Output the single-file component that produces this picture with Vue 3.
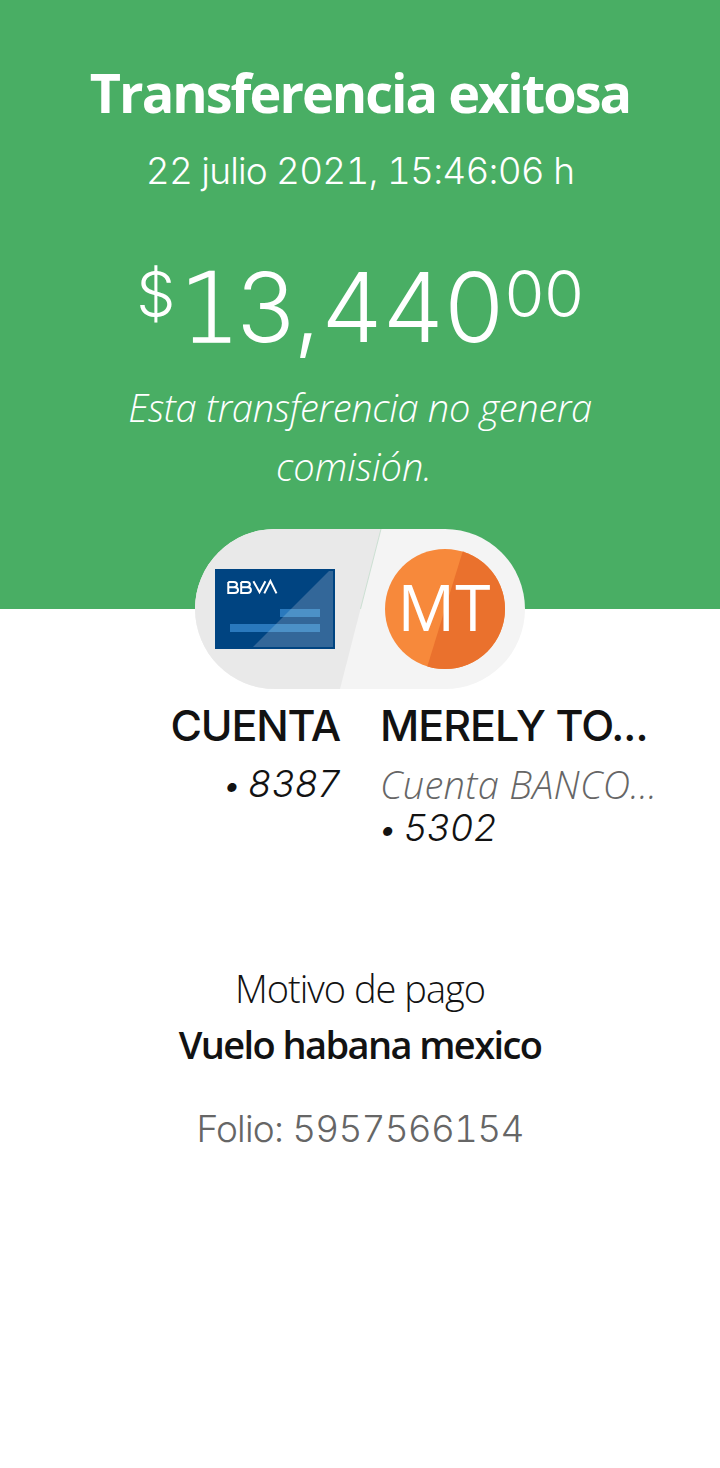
<script setup>
const receipt = {
  title: 'Transferencia exitosa',
  date: '22 julio 2021, 15:46:06 h',
  whole: '3,440',
  cents: '00',
  reason: 'Vuelo habana mexico',
  folio: '5957566154',
}
</script>

<template>
  <main class="receipt">
    <header class="hero">
      <h1 class="title">{{ receipt.title }}</h1>
      <p class="date">{{ receipt.date }}</p>
      <p class="amount">
        <span class="currency">$</span>
        <span class="whole"><span class="lead">1</span>{{ receipt.whole }}</span>
        <span class="cents">{{ receipt.cents }}</span>
      </p>
      <p class="note">Esta transferencia no genera<br /><span class="note-end">comisión.</span></p>
    </header>

    <svg class="pill" width="330" height="160" viewBox="0 0 330 160">
      <defs>
        <clipPath id="pill-shape"><rect width="330" height="160" rx="80" /></clipPath>
        <clipPath id="avatar-shape"><circle cx="250" cy="80" r="60" /></clipPath>
      </defs>
      <g clip-path="url(#pill-shape)">
        <rect width="330" height="160" fill="#f4f4f4" />
        <path d="M0 0H186L145 160H0Z" fill="#e9e9e9" />
        <path d="M186 0L165.500 80" stroke="#c3dccb" stroke-width="0.8" />
      </g>
      <rect x="20" y="40" width="120" height="80" fill="#004481" />
      <path d="M58 118L134 42H138V118Z" fill="#336799" />
      <path d="M85 80H125V88H85ZM35 95H125V103H35Z" fill="#2a79bd" />
      <path d="M96 80H125V88H88ZM81 95H125V103H73Z" fill="#4c91c7" />
      <g fill="none" stroke="#fff" stroke-width="2">
        <path d="M33.300 53V64H39.500C44.200 64 44.200 58.200 39.500 58.200H34M33.300 53H38.900C43 53 43 58.200 38.900 58.200" />
        <path d="M46.200 53V64H52.400C57.100 64 57.100 58.200 52.400 58.200H47M46.200 53H51.800C55.900 53 55.900 58.200 51.800 58.200" />
        <path d="M58.400 52.200L64.500 63.200L70.400 52.200M69.300 64.400L75.400 52L81.500 64.400" />
      </g>
      <g clip-path="url(#avatar-shape)">
        <rect x="190" y="20" width="120" height="120" fill="#f7893b" />
        <path d="M270 15H320V145H230Z" fill="#ea712d" />
      </g>
      <text class="initials" x="249" y="102" text-anchor="middle">MT</text>
    </svg>

    <section class="accounts">
      <div class="account origin">
        <p class="name">CUENTA</p>
        <p class="number"><span class="dot">•</span> 8387</p>
      </div>
      <div class="account">
        <p class="name merchant">MERELY TO...</p>
        <p class="bank">Cuenta BANCO...</p>
        <p class="number"><span class="dot">•</span> 5302</p>
      </div>
    </section>

    <section class="details">
      <p class="label">Motivo de pago</p>
      <p class="reason">{{ receipt.reason }}</p>
      <p class="folio">Folio: {{ receipt.folio }}</p>
    </section>
  </main>
</template>

<style>
body { background: #fff; }
</style>

<style scoped>
.receipt {
  width: 720px;
  height: 1468px;
  overflow: hidden;
  background: #fff;
  color: #121212;
  font-family: "Open Sans", "Noto Sans", sans-serif;
  font-size: 38px;
  font-weight: 340;
}
h1, p { margin: 0; white-space: nowrap; }
.hero {
  box-sizing: border-box;
  height: 609px;
  padding-top: 62px;
  background: #49ae64;
  color: #fff;
  text-align: center;
}
.title { font-size: 54px; line-height: 60px; font-weight: 750; letter-spacing: -2px; }
.date {
  margin-top: 24px;
  font-family: Inter, sans-serif;
  font-size: 37px;
  font-weight: 290;
  font-variant-numeric: tabular-nums;
  letter-spacing: -0.8px;
  line-height: 50px;
}
.amount {
  display: flex;
  justify-content: center;
  height: 100px;
  margin-top: 60px;
  font-family: Inter, sans-serif;
  font-weight: 300;
}
.currency, .cents { margin-top: -2px; font-size: 64px; line-height: 80px; }
.currency { font-size: 62px; }
.whole { font-size: 96px; line-height: 102px; letter-spacing: 1px; }
.lead {
  margin: 0 -4px 0 4px;
  font-family: "DejaVu Sans Light", "DejaVu Sans", sans-serif;
  font-weight: 200;
  letter-spacing: 0;
  line-height: 1;
  -webkit-text-stroke: 1.6px #fff;
}
.note { margin-top: 22px; line-height: 59px; font-style: italic; letter-spacing: -0.3px; }
.note-end { position: relative; left: -6px; letter-spacing: 0; }
.pill { display: block; margin: -80px auto 0; }
.initials { fill: #fff; font-size: 64px; font-weight: 380; }
.accounts {
  display: grid;
  grid-template-columns: 340px 340px;
  column-gap: 40px;
  height: 150px;
  margin-top: 11px;
}
.origin { text-align: right; }
.name {
  margin-bottom: 12px;
  font-family: Inter, sans-serif;
  font-size: 43px;
  line-height: 50px;
  font-weight: 550;
  letter-spacing: -1.2px;
}
.merchant { letter-spacing: -1px; }
.number, .bank { line-height: 44px; font-style: italic; }
.number { font-family: Inter, sans-serif; font-size: 37px; font-weight: 290; letter-spacing: 0.8px; }
.dot { margin: 0 -5px 0 -2px; font-size: 34px; line-height: 1; }
.bank { color: #666; letter-spacing: 0.3px; }
.details { margin-top: 110px; text-align: center; line-height: 56px; }
.label { letter-spacing: -1px; }
.reason { font-weight: 650; letter-spacing: -1.6px; }
.folio {
  margin-top: 29px;
  color: #666;
  font-family: Inter, sans-serif;
  font-size: 37px;
  font-weight: 290;
  font-variant-numeric: tabular-nums;
  letter-spacing: -0.8px;
}
</style>
